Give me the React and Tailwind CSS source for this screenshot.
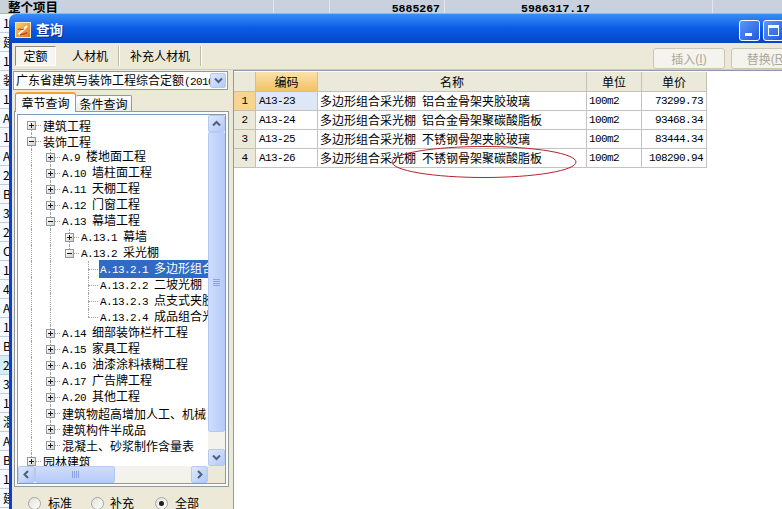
import React from "react";

const LINE = "border-[#a0a0a0]";

// half-width latin/digits, 6px per char like the original bitmap font
const M = ({ children, className = "" }) => (
  <span className={`font-['Liberation_Mono',monospace] text-[11px] tracking-[-0.6px] ${className}`}>{children}</span>
);

const tree = [
  { lv: 0, box: "+", t: "建筑工程", anc: [], first: true },
  { lv: 0, box: "-", t: "装饰工程", anc: [] },
  { lv: 1, box: "+", code: "A.9 ", t: "楼地面工程", anc: [1] },
  { lv: 1, box: "+", code: "A.10 ", t: "墙柱面工程", anc: [1] },
  { lv: 1, box: "+", code: "A.11 ", t: "天棚工程", anc: [1] },
  { lv: 1, box: "+", code: "A.12 ", t: "门窗工程", anc: [1] },
  { lv: 1, box: "-", code: "A.13 ", t: "幕墙工程", anc: [1] },
  { lv: 2, box: "+", code: "A.13.1 ", t: "幕墙", anc: [1, 1] },
  { lv: 2, box: "-", code: "A.13.2 ", t: "采光棚", anc: [1, 1], last: true },
  { lv: 3, code: "A.13.2.1 ", t: "多边形组合采光棚", anc: [1, 1, 0], sel: true },
  { lv: 3, code: "A.13.2.2 ", t: "二坡光棚", anc: [1, 1, 0] },
  { lv: 3, code: "A.13.2.3 ", t: "点支式夹胶玻璃采光棚", anc: [1, 1, 0] },
  { lv: 3, code: "A.13.2.4 ", t: "成品组合光棚", anc: [1, 1, 0], last: true },
  { lv: 1, box: "+", code: "A.14 ", t: "细部装饰栏杆工程", anc: [1] },
  { lv: 1, box: "+", code: "A.15 ", t: "家具工程", anc: [1] },
  { lv: 1, box: "+", code: "A.16 ", t: "油漆涂料裱糊工程", anc: [1] },
  { lv: 1, box: "+", code: "A.17 ", t: "广告牌工程", anc: [1] },
  { lv: 1, box: "+", code: "A.20 ", t: "其他工程", anc: [1] },
  { lv: 1, box: "+", t: "建筑物超高增加人工、机械", anc: [1] },
  { lv: 1, box: "+", t: "建筑构件半成品", anc: [1] },
  { lv: 1, box: "+", t: "混凝土、砂浆制作含量表", anc: [1], last: true },
  { lv: 0, box: "+", t: "园林建筑", anc: [] },
];

const rows = [
  ["A13-23", "多边形组合采光棚", "铝合金骨架夹胶玻璃", "100m2", "73299.73"],
  ["A13-24", "多边形组合采光棚", "铝合金骨架聚碳酸脂板", "100m2", "93468.34"],
  ["A13-25", "多边形组合采光棚", "不锈钢骨架夹胶玻璃", "100m2", "83444.34"],
  ["A13-26", "多边形组合采光棚", "不锈钢骨架聚碳酸脂板", "100m2", "108290.94"],
];

const Arrow = ({ dir }) => {
  const pts = {
    up: "1,6.5 4.5,3 8,6.5",
    down: "1,2.5 4.5,6 8,2.5",
    left: "6,1 2.5,4.5 6,8",
    right: "3,1 6.5,4.5 3,8",
  }[dir];
  return (
    <svg width="9" height="9" viewBox="0 0 9 9">
      <polyline points={pts} fill="none" stroke="#4d6185" strokeWidth="2" />
    </svg>
  );
};

const SBtn = ({ dir, className = "" }) => (
  <div className={`flex shrink-0 items-center justify-center rounded-[2px] border border-[#b6c9f5] bg-linear-to-br from-[#dfe9fe] to-[#b4c8f6] ${className}`}>
    <Arrow dir={dir} />
  </div>
);

const Box = ({ sign }) => (
  <div className="absolute left-[5px] top-[4px] h-[9px] w-[9px] border border-[#8c98a6] bg-linear-to-br from-white to-[#d6d2c6]">
    <div className="absolute left-[1px] top-[3px] h-[1px] w-[5px] bg-[#1a1a1a]" />
    {sign === "+" && <div className="absolute left-[3px] top-[1px] h-[5px] w-[1px] bg-[#1a1a1a]" />}
  </div>
);

const TreeRow = ({ r }) => (
  <div className="flex h-[16px] shrink-0 items-center whitespace-pre">
    {r.anc.map((c, i) => (
      <div key={i} className="relative h-full w-[19px] shrink-0">
        {c ? <div className={`absolute left-[9px] top-0 h-full border-l border-dotted ${LINE}`} /> : null}
      </div>
    ))}
    <div className="relative h-full w-[19px] shrink-0">
      {!r.first && <div className={`absolute left-[9px] top-0 h-[8px] border-l border-dotted ${LINE}`} />}
      {!r.last && <div className={`absolute left-[9px] top-[8px] h-[8px] border-l border-dotted ${LINE}`} />}
      <div className={`absolute left-[9px] top-[8px] w-[10px] border-t border-dotted ${LINE}`} />
      {r.box && <Box sign={r.box} />}
    </div>
    <span className={`ml-[1px] px-[1px] leading-[15px] ${r.sel ? "bg-[#316ac5] text-white" : ""}`}>
      {r.code && <M>{r.code}</M>}
      {r.t}
    </span>
  </div>
);

const Radio = ({ on }) => (
  <div className="flex h-[13px] w-[13px] shrink-0 items-center justify-center rounded-full border border-[#a5a59a] bg-linear-to-br from-[#e2e1da] to-white">
    {on && <div className="h-[5px] w-[5px] rounded-full bg-[#1f1f1f]" />}
  </div>
);

function Sheet() {
  const side = ["1", "建", "1", "装", "1", "A", "1", "A", "2", "B", "3", "2", "C", "1", "4", "A", "1", "B", "2", "3", "1", "混", "A", "B", "1", "建"];
  return (
    <div className="flex flex-col">
      <div className="flex h-[14px] border-b border-[#a9b3c1] bg-[#c8d1dd] font-bold leading-[13px]">
        <div className="w-[274px] border-r border-[#e2e7ee] pl-[8px] text-[12.5px]">整个项目</div>
        <div className="w-[56px] border-r border-[#e2e7ee]" />
        <div className="w-[115px] border-r border-[#e2e7ee] pr-[4px] text-right">
          <span className="font-['Liberation_Mono',monospace] text-[11.5px]">5885267</span>
        </div>
        <div className="w-[268px] border-r border-[#e2e7ee] pl-[76px]">
          <span className="font-['Liberation_Mono',monospace] text-[11.5px]">5986317.17</span>
        </div>
        <div className="flex-1" />
      </div>
      <div className="flex w-[9px] flex-col overflow-hidden">
        {side.map((c, i) => (
          <div
            key={i}
            className={`h-[19px] shrink-0 border-b border-[#c5ccd6] pl-[3px] leading-[18px] ${i === 18 ? "bg-[#d4eef8]" : "bg-[#f3f9fc]"}`}
          >
            {c}
          </div>
        ))}
      </div>
    </div>
  );
}

function TitleBar() {
  return (
    <div className="flex h-[29px] shrink-0 items-center rounded-t-[7px] bg-linear-to-b from-[#3a8cf8] via-[#0a5be4] to-[#0745c6] pl-[6px] pr-[5px] pt-[3px]">
      <svg width="16" height="16" viewBox="0 0 16 16">
        <defs>
          <linearGradient id="ic" x1="0" y1="0" x2="1" y2="1">
            <stop offset="0" stopColor="#fcd868" />
            <stop offset="1" stopColor="#e2721e" />
          </linearGradient>
        </defs>
        <rect x="0.5" y="0.5" width="15" height="15" fill="url(#ic)" stroke="#f8e7bd" />
        <path d="M3.5 12.5 L12 4" stroke="#ffffff" strokeWidth="2" />
        <path d="M3 7.5 C5 5.5 6.5 9.5 9 6.5" stroke="#b5382a" strokeWidth="1.1" fill="none" />
        <path d="M5 13 C7 11 9 13.5 12 10.5" stroke="#b5382a" strokeWidth="1.1" fill="none" />
      </svg>
      <span className="ml-[5px] text-[13.5px] font-bold text-white [text-shadow:1px_1px_0_#0a2a8c]">查询</span>
      <div className="flex-1" />
      <div className="flex gap-[3px]">
        <div className="relative h-[21px] w-[21px] rounded-[3px] border border-white bg-linear-to-br from-[#5c97f8] to-[#1f58dc]">
          <div className="absolute bottom-[4px] left-[5px] h-[3px] w-[7px] bg-white" />
        </div>
        <div className="relative h-[21px] w-[21px] rounded-[3px] border border-white bg-linear-to-br from-[#5c97f8] to-[#1f58dc]">
          <div className="absolute left-[4px] top-[4px] h-[11px] w-[11px] border border-t-[3px] border-white" />
        </div>
        <div className="h-[21px] w-[21px] rounded-[3px] border border-white bg-linear-to-br from-[#e8785a] to-[#c53a18]" />
      </div>
    </div>
  );
}

function Toolbar() {
  return (
    <div className="flex h-[27px] shrink-0 items-start border-b border-[#cfccbd] pl-[3px] pr-[10px]">
      <div className="mt-[3px] flex h-[20px] w-[41px] items-center justify-center border border-b-white border-l-[#8d8b7f] border-r-white border-t-[#8d8b7f] bg-[#f6f5f0]">
        定额
      </div>
      <div className="ml-[6px] mt-[3px] flex h-[20px] w-[56px] items-center justify-center">人材机</div>
      <div className="mt-[3px] h-[20px] w-[2px] border-l border-r border-l-[#bfbcae] border-r-white" />
      <div className="mt-[3px] flex h-[20px] w-[80px] items-center justify-center">补充人材机</div>
      <div className="mt-[3px] h-[20px] w-[2px] border-l border-r border-l-[#bfbcae] border-r-white" />
      <div className="flex-1" />
      <div className="mt-[5px] flex h-[21px] w-[72px] items-center justify-center rounded-[3px] border border-[#cac7b8] bg-[#f4f3ee] text-[#aca899]">
        插入<span className="font-['Liberation_Sans',sans-serif] text-[12px]">(<u>I</u>)</span>
      </div>
      <div className="ml-[6px] mt-[5px] flex h-[21px] w-[72px] items-center justify-center rounded-[3px] border border-[#cac7b8] bg-[#f4f3ee] text-[#aca899]">
        替换<span className="font-['Liberation_Sans',sans-serif] text-[12px]">(<u>R</u>)</span>
      </div>
    </div>
  );
}

function LeftPanel() {
  return (
    <div className="flex w-[221px] shrink-0 flex-col">
      <div className="ml-[1px] mt-[1px] flex h-[19px] w-[215px] items-center border border-[#7f9db9] bg-white pl-[2px] pr-[1px]">
        <div className="flex-1 overflow-hidden whitespace-nowrap leading-[16px]">
          广东省建筑与装饰工程综合定额<M>(2010)</M>
        </div>
        <SBtn dir="down" className="h-[15px] w-[16px]" />
      </div>
      <div className="mt-[2px] flex h-[19px] items-end pl-[3px]">
        <div className="relative z-10 -mb-[1px] flex h-[20px] w-[61px] items-center justify-center rounded-t-[3px] border border-b-0 border-t-2 border-[#919b9c] border-t-[#f1a23a] bg-[#fcfcfe]">
          章节查询
        </div>
        <div className="flex h-[16px] w-[56px] items-center justify-center rounded-t-[2px] border border-b-0 border-l-0 border-[#919b9c] bg-linear-to-b from-white to-[#ecebe5] pt-[1px]">
          条件查询
        </div>
      </div>
      <div className="ml-[2px] flex h-[376px] w-[215px] flex-col border border-[#919b9c] bg-[#fbfbf9] p-[2px]">
        <div className="flex flex-1 flex-col overflow-hidden border border-[#7f9db9] bg-white">
          <div className="flex min-h-0 flex-1">
            <div className="min-w-0 flex-1 overflow-hidden pl-[4px] pt-[2px]">
              {tree.map((r, i) => (
                <TreeRow key={i} r={r} />
              ))}
            </div>
            <div className="flex w-[17px] shrink-0 flex-col bg-[#f3f2ec]">
              <SBtn dir="up" className="h-[17px] w-[17px]" />
              <div className="flex h-[300px] shrink-0 flex-col items-center justify-center gap-[1px] rounded-[2px] border border-[#b6c9f5] bg-linear-to-r from-[#cfdcfd] to-[#b6cbf7]">
                <div className="h-[1px] w-[7px] bg-[#8aa3e0]" />
                <div className="h-[1px] w-[7px] bg-[#8aa3e0]" />
                <div className="h-[1px] w-[7px] bg-[#8aa3e0]" />
                <div className="h-[1px] w-[7px] bg-[#8aa3e0]" />
              </div>
              <div className="flex-1" />
              <SBtn dir="down" className="h-[17px] w-[17px]" />
            </div>
          </div>
          <div className="flex h-[17px] shrink-0 bg-[#f3f2ec]">
            <SBtn dir="left" className="h-[17px] w-[17px]" />
            <div className="flex w-[80px] shrink-0 items-center justify-center gap-[1px] rounded-[2px] border border-[#b6c9f5] bg-linear-to-b from-[#cfdcfd] to-[#b6cbf7]">
              <div className="h-[7px] w-[1px] bg-[#8aa3e0]" />
              <div className="h-[7px] w-[1px] bg-[#8aa3e0]" />
              <div className="h-[7px] w-[1px] bg-[#8aa3e0]" />
              <div className="h-[7px] w-[1px] bg-[#8aa3e0]" />
            </div>
            <div className="flex-1" />
            <SBtn dir="right" className="h-[17px] w-[17px]" />
            <div className="w-[17px] shrink-0 bg-[#ece9d8]" />
          </div>
        </div>
      </div>
      <div className="mt-[9px] flex h-[14px] items-center">
        <div className="ml-[16px]"><Radio /></div>
        <span className="ml-[7px]">标准</span>
        <div className="ml-[19px]"><Radio /></div>
        <span className="ml-[6px]">补充</span>
        <div className="ml-[21px]"><Radio on /></div>
        <span className="ml-[7px]">全部</span>
      </div>
    </div>
  );
}

function Grid() {
  const hd = "flex h-full items-center justify-center border-b border-r border-[#c4c1b0]";
  const cell = "flex h-full items-center border-b border-r border-[#c3c3c3] whitespace-pre";
  return (
    <div className="flex-1 border-l border-t border-[#8a9bb0] bg-white pt-[1px]">
      <div className="flex h-[20px]">
        <div className={`${hd} w-[22px] bg-[#ebe9da]`} />
        <div className={`${hd} w-[62px] bg-linear-to-b from-[#fbe2ab] to-[#f3c162]`}>编码</div>
        <div className={`${hd} w-[269px] bg-[#ebe9da]`}>名称</div>
        <div className={`${hd} w-[55px] bg-[#ebe9da]`}>单位</div>
        <div className={`${hd} w-[65px] bg-[#ebe9da]`}>单价</div>
      </div>
      {rows.map((r, i) => (
        <div key={r[0]} className="flex h-[19px]">
          <div className={`${hd} w-[22px] ${i === 0 ? "bg-[#f8d493]" : "bg-[#ebe9da]"}`}>
            <M>{i + 1}</M>
          </div>
          <div className={`${cell} w-[62px] pl-[3px] ${i === 0 ? "bg-[#dee7f5]" : ""}`}>
            <M>{r[0]}</M>
          </div>
          <div className={`${cell} w-[269px] pl-[2px]`}>
            {r[1]}
            <M> </M>
            {r[2]}
          </div>
          <div className={`${cell} w-[55px] pl-[2px]`}>
            <M>{r[3]}</M>
          </div>
          <div className={`${cell} w-[65px] justify-end pr-[3px]`}>
            <M>{r[4]}</M>
          </div>
        </div>
      ))}
    </div>
  );
}

export default function App() {
  return (
    <div className="relative h-[509px] w-[782px] overflow-hidden bg-[#f3f9fc] font-['Noto_Sans_CJK_SC',sans-serif] text-[12px] leading-none text-black">
      <Sheet />
      <div className="absolute left-[9px] top-[14px] flex h-[496px] w-[804px] flex-col">
        <TitleBar />
        <div className="flex flex-1 flex-col border-l-[3px] border-[#0b3fd3] bg-[#ece9d8]">
          <Toolbar />
          <div className="flex flex-1">
            <LeftPanel />
            <Grid />
          </div>
        </div>
      </div>
      {/* red hand-drawn mark over row 4 */}
      <svg className="absolute left-[386px] top-[140px]" width="200" height="45" viewBox="0 0 200 45">
        <ellipse cx="98" cy="22" rx="92" ry="15.5" fill="none" stroke="#b8232b" strokeWidth="1" />
      </svg>
    </div>
  );
}
